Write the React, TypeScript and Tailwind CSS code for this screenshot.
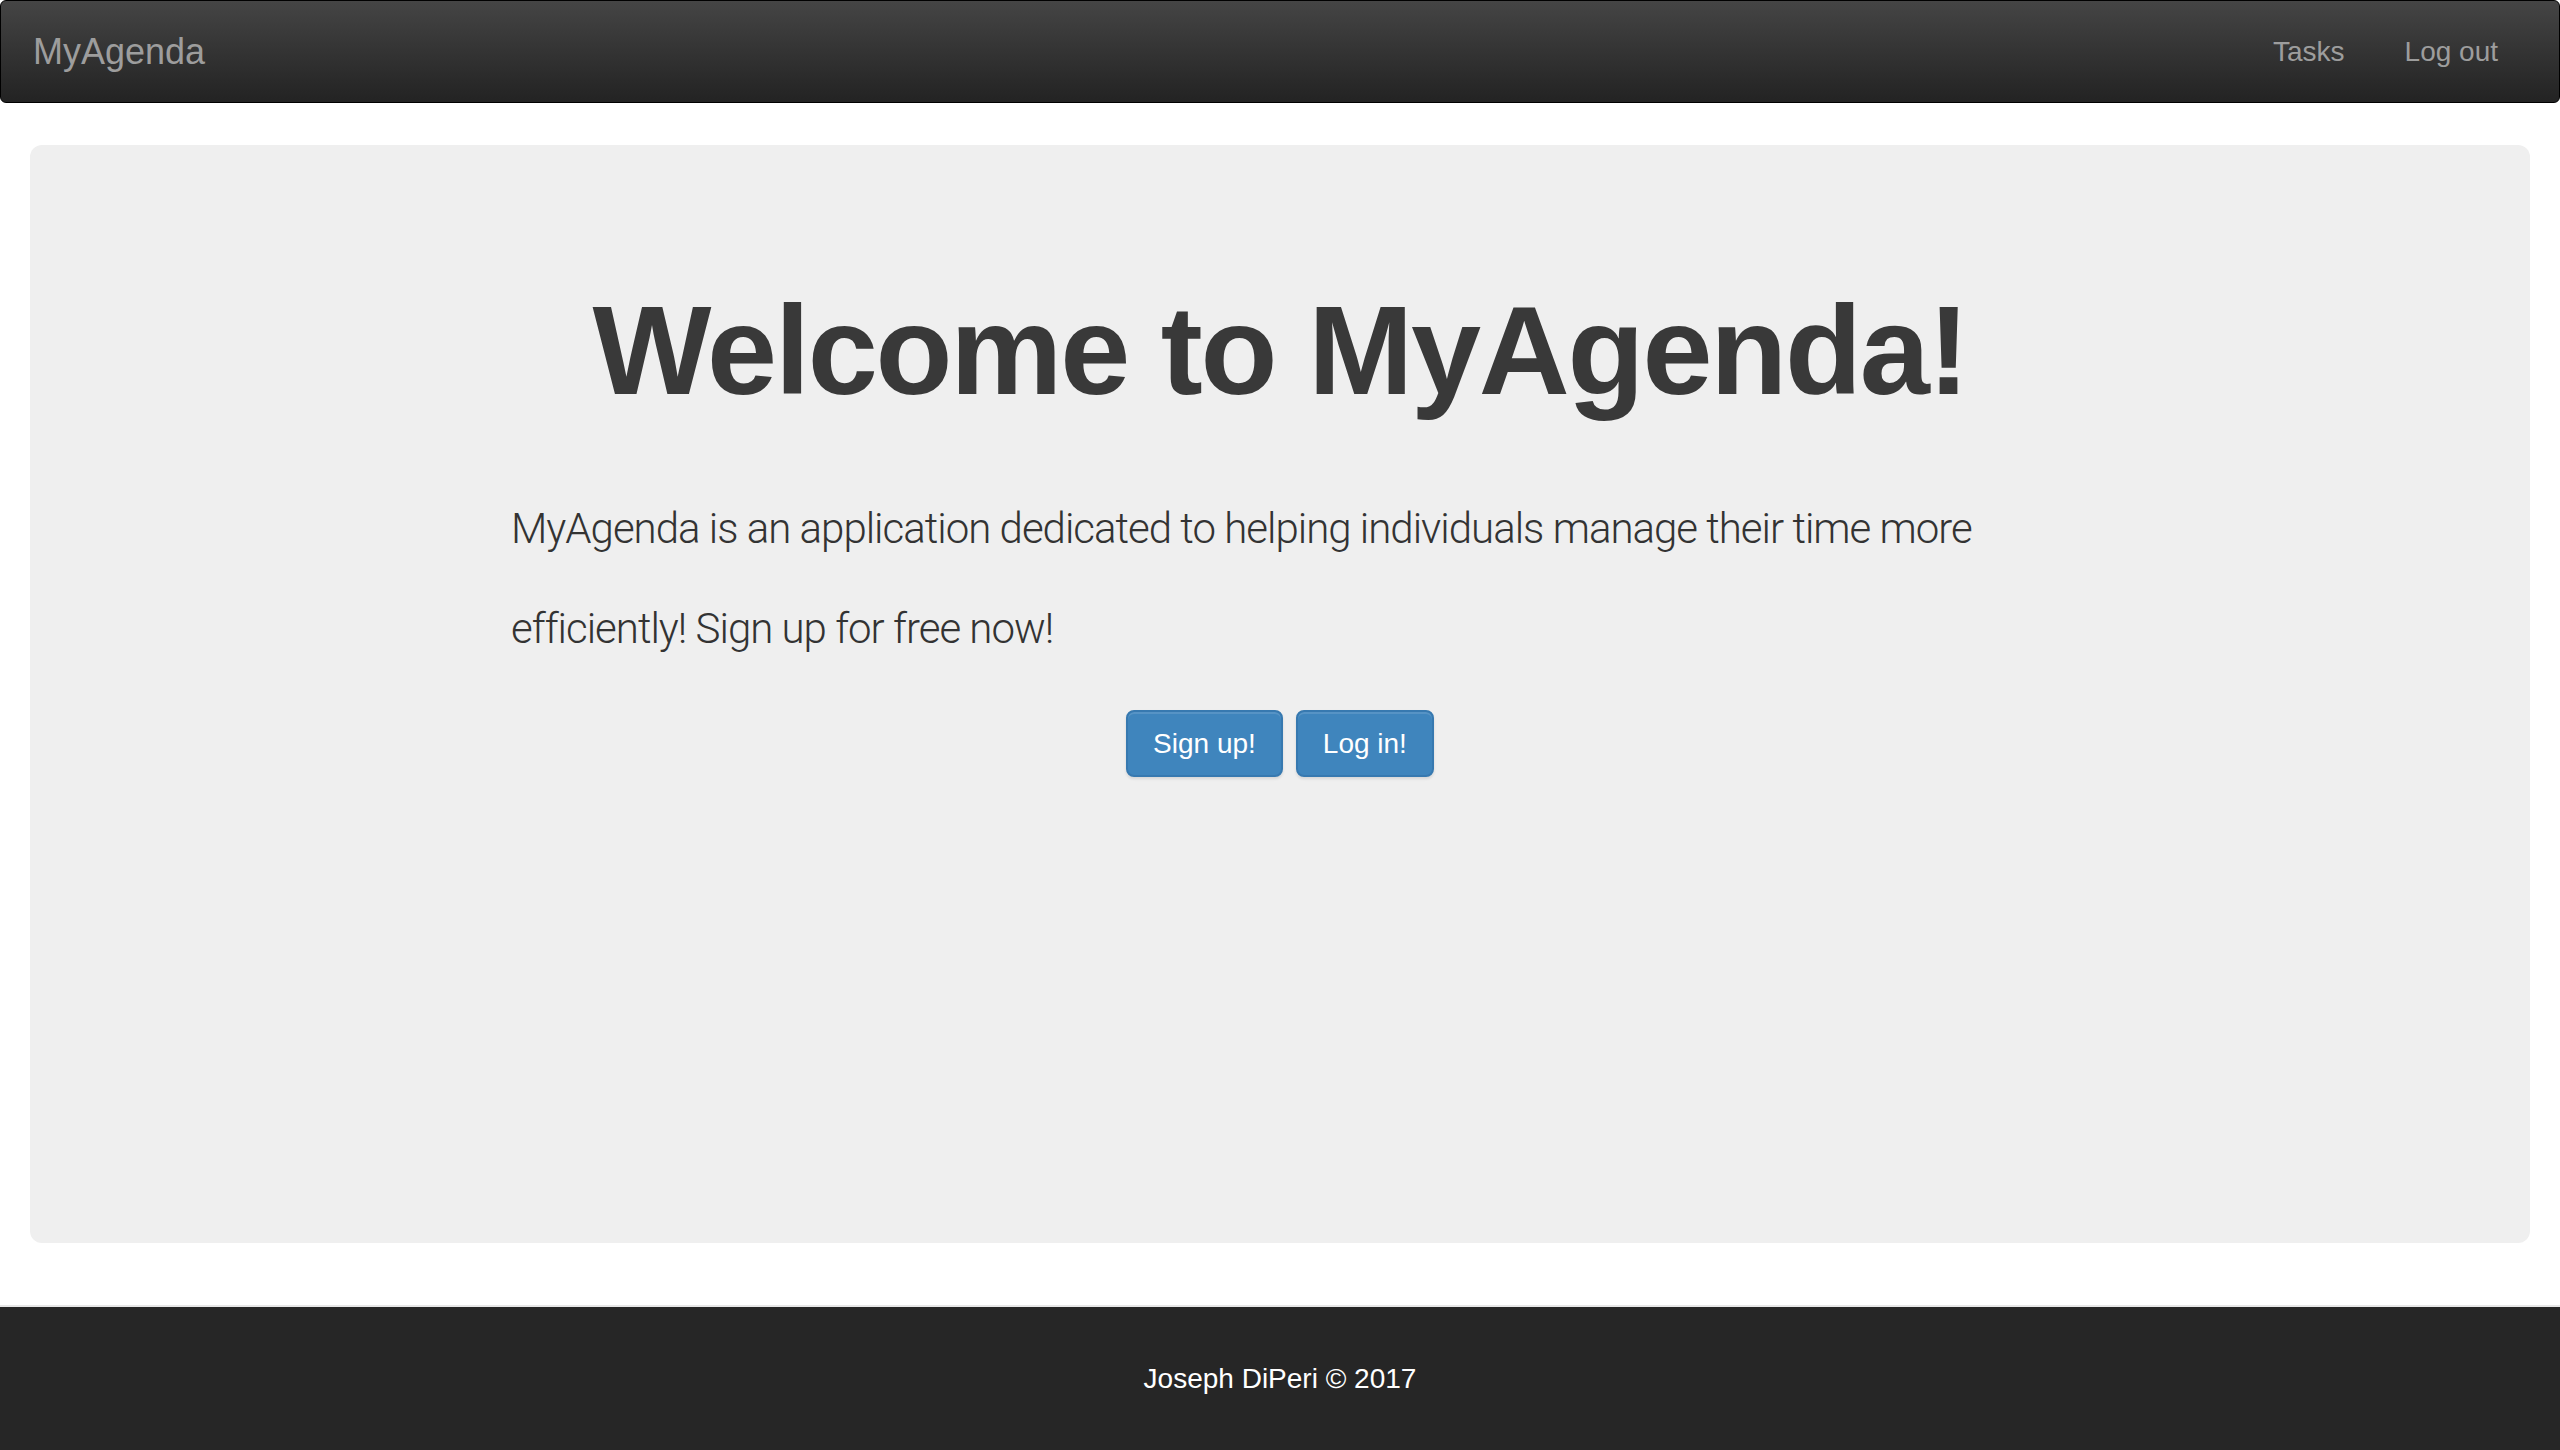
import React from 'react';

const sans = "font-['Liberation_Sans',Arial,sans-serif]";

const Navbar: React.FC = () => (
  <nav className="flex h-[103px] items-center justify-between rounded-[6px] border border-black bg-gradient-to-b from-[#454545] to-[#232323] pl-[32px] pr-[31px]">
    <a href="#" className={`${sans} text-[36px] text-[#9d9d9d]`}>
      MyAgenda
    </a>
    <div className="flex items-center">
      {['Tasks', 'Log out'].map((item) => (
        <a key={item} href="#" className={`${sans} px-[30px] text-[28px] text-[#9d9d9d]`}>
          {item}
        </a>
      ))}
    </div>
  </nav>
);

const Jumbotron: React.FC = () => (
  <section className="mx-[30px] mt-[42px] h-[1098px] rounded-[12px] bg-[#efefef] pt-[137px]">
    <h1 className={`${sans} text-center text-[126px] font-bold leading-[138px] tracking-[-2.2px] text-[#393939]`}>
      Welcome to MyAgenda!
    </h1>
    <p className="mx-auto mt-[59px] w-[1538px] font-['Roboto',sans-serif] text-[42px] font-light leading-[100px] tracking-[-1px] text-[#333333]">
      MyAgenda is an application dedicated to helping individuals manage their time more efficiently! Sign up for free now!
    </p>
    <div className="mt-[31px] flex justify-center gap-[13px]">
      <button className={`${sans} h-[67px] rounded-[8px] border-2 border-[#3779b0] bg-[#3f85bd] px-[25px] text-[28px] text-white shadow-[inset_0_2px_0_rgba(255,255,255,0.12),0_2px_3px_rgba(0,0,0,0.1)]`}>
        Sign up!
      </button>
      <button className={`${sans} h-[67px] rounded-[8px] border-2 border-[#3779b0] bg-[#3f85bd] px-[25px] text-[28px] text-white shadow-[inset_0_2px_0_rgba(255,255,255,0.12),0_2px_3px_rgba(0,0,0,0.1)]`}>
        Log in!
      </button>
    </div>
  </section>
);

const Footer: React.FC = () => (
  <footer className="mt-[62px] flex h-[145px] items-center justify-center border-t-2 border-[#e7e7e7] bg-[#262626]">
    <span className={`${sans} text-[28px] text-white`}>Joseph DiPeri © 2017</span>
  </footer>
);

export default function App() {
  return (
    <div className="min-h-[1450px] bg-white">
      <Navbar />
      <Jumbotron />
      <Footer />
    </div>
  );
}
